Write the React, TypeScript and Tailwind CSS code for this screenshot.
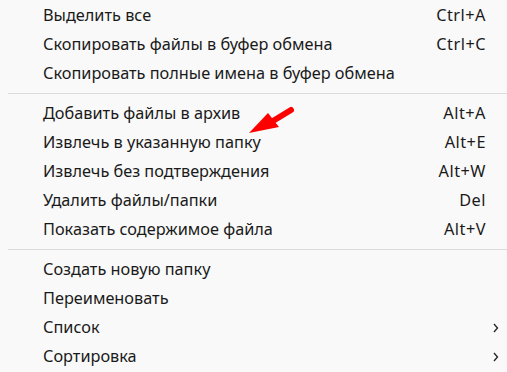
const items: ({ label: string; key?: string; sub?: boolean } | null)[] = [
  { label: "Выделить все", key: "Ctrl+A" },
  { label: "Скопировать файлы в буфер обмена", key: "Ctrl+C" },
  { label: "Скопировать полные имена в буфер обмена" },
  null,
  { label: "Добавить файлы в архив", key: "Alt+A" },
  { label: "Извлечь в указанную папку", key: "Alt+E" },
  { label: "Извлечь без подтверждения", key: "Alt+W" },
  { label: "Удалить файлы/папки", key: "Del" },
  { label: "Показать содержимое файла", key: "Alt+V" },
  null,
  { label: "Создать новую папку" },
  { label: "Переименовать" },
  { label: "Список", sub: true },
  { label: "Сортировка", sub: true },
];

export default function App() {
  return (
    <div className="relative w-[507px] h-[372px] overflow-hidden bg-[#f9f9f9] pt-px text-[16.3px] text-[#1a1a1a] font-['Noto_Sans',sans-serif]">
      {items.map((it, i) =>
        it ? (
          <div key={i} className="flex items-center h-[29px] pl-[43px] pr-[21px]">
            <span className="flex-1">{it.label}</span>
            {it.key && <span className="tracking-[0.5px]">{it.key}</span>}
            {it.sub && (
              <svg width="8" height="10" viewBox="0 0 8 10" className="-mr-[14px]">
                <path d="M2 1 L5.5 5 L2 9" fill="none" stroke="#222" strokeWidth="1.3" />
              </svg>
            )}
          </div>
        ) : (
          <div key={i} className="h-[11px] flex items-center pl-2">
            <div className="h-px w-full bg-[#dcdcdc]" />
          </div>
        )
      )}
      <svg className="absolute left-[246px] top-[106px]" width="50" height="30" viewBox="246 106 50 30">
        <line x1="291" y1="110" x2="268" y2="124" stroke="#ff0000" strokeWidth="6" strokeLinecap="round" />
        <polygon points="249,133 268,113 279,127" fill="#ff0000" />
      </svg>
    </div>
  );
}
